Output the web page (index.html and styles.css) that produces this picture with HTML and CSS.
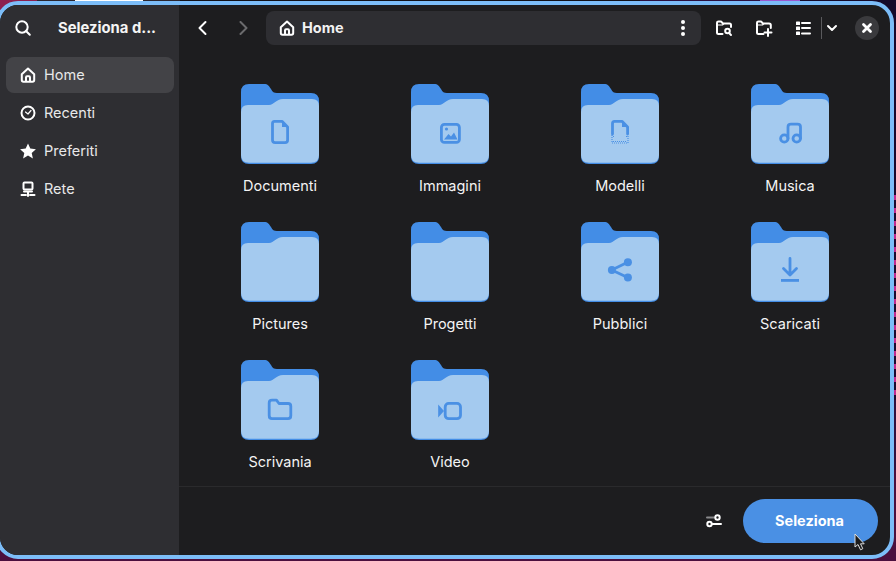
FILE: index.html
```html
<!DOCTYPE html>
<html lang="it">
<head>
<meta charset="utf-8">
<title>Seleziona</title>
<link rel="stylesheet" href="styles.css">
</head>
<body>
<svg class="sprite" width="0" height="0" aria-hidden="true">
  <defs>
    <symbol id="folder" viewBox="0 0 78 80">
      <path class="f-back" d="M8 0H23C27 0 28 2 30 5C31.500 8 33 9 36 9H70Q78 9 78 17V72Q78 80 70 80H8Q0 80 0 72V8Q0 0 8 0Z"/>
      <path class="f-front" d="M0 28Q0 21 7 21H28C33 21 35 15 42 15H71Q78 15 78 22V71Q78 78.800 70 78.800H8Q0 78.800 0 71Z"/>
    </symbol>
    <symbol id="home" viewBox="0 0 16 16">
      <path class="ln" d="M1.800 7.300L8 1.500L14.200 7.300V13Q14.200 14.700 12.500 14.700H3.500Q1.800 14.700 1.800 13ZM6 14.700V10.500Q6 9.300 7 9.300H9Q10 9.300 10 10.500V14.700"/>
    </symbol>
  </defs>
</svg>

<div class="window">
  <aside class="sidebar">
    <header class="side-head">
      <svg class="i16" viewBox="0 0 16 16"><circle class="ln" cx="7" cy="7" r="5.700"/><path class="ln" d="M11 11L14.800 14.800"/></svg>
      <span class="side-title">Seleziona d...</span>
    </header>
    <nav class="places">
      <a class="place active"><svg class="i16"><use href="#home"/></svg><span class="place-label">Home</span></a>
      <a class="place"><svg class="i16" viewBox="0 0 16 16"><circle class="ln" cx="8" cy="8" r="6.500"/><path class="ln thin" d="M5.500 7L8 9L11 5.500"/></svg><span class="place-label">Recenti</span></a>
      <a class="place"><svg class="i16" viewBox="0 0 16 16"><path class="fl" d="M8 .5L10.300 5.600L15.900 6.200L11.700 9.900L12.900 15.400L8 12.600L3.100 15.400L4.300 9.900L.1 6.200L5.700 5.600Z"/></svg><span class="place-label">Preferiti</span></a>
      <a class="place"><svg class="i16" viewBox="0 0 16 16"><rect class="ln" x="3.500" y="1.500" width="9" height="7" rx="1"/><path class="ln" d="M4 10.500H12M8 10.500V15M1.500 14H6M10 14H14.500"/></svg><span class="place-label">Rete</span></a>
    </nav>
  </aside>

  <main class="main">
    <header class="toolbar">
      <button class="tool nav-btn"><svg class="i16" viewBox="0 0 16 16"><path class="ln" d="M10.500 2L4.500 8L10.500 14"/></svg></button>
      <button class="tool nav-btn dim"><svg class="i16" viewBox="0 0 16 16"><path class="ln" d="M5.500 2L11.500 8L5.500 14"/></svg></button>
      <div class="pathbar">
        <svg class="i16"><use href="#home"/></svg>
        <span class="path-label">Home</span>
        <svg class="kebab" viewBox="0 0 4 16"><circle class="fl" cx="2" cy="2" r="2"/><circle class="fl" cx="2" cy="8" r="2"/><circle class="fl" cx="2" cy="14" r="2"/></svg>
      </div>
      <div class="actions">
        <button class="tool act"><svg class="i16" viewBox="0 0 16 16"><path class="ln" d="M6.500 14H2.500Q1 14 1 12.500V2.800Q1 1.500 2.500 1.500H5L7 3.500H13.500Q15 3.500 15 5V7"/><path class="ln thin" d="M1 5H6.500L8 3.500"/><circle class="ln" cx="11.500" cy="11" r="2.300"/><path class="ln" d="M13 13L15 15"/></svg></button>
        <button class="tool act"><svg class="i16" viewBox="0 0 16 16"><path class="ln" d="M7.500 14H2.500Q1 14 1 12.500V2.800Q1 1.500 2.500 1.500H5L7 3.500H13Q14.800 3.500 14.800 5V8"/><path class="ln thin" d="M1 5H6.500L8 3.500"/><path class="ln" d="M12 9V16M8.500 12.500H15.500"/></svg></button>
        <button class="tool act list"><svg class="i16" viewBox="0 0 16 16"><rect class="fl" x="1" y="1.500" width="4" height="3.500" rx=".6"/><rect class="fl" x="1" y="6.500" width="4" height="3.500" rx=".6"/><rect class="fl" x="1" y="11.500" width="4" height="3.500" rx=".6"/><path class="ln" d="M7 3H15M7 8H15M7 13.500H15"/></svg></button>
        <span class="divider"></span>
        <button class="tool chev"><svg class="i12" viewBox="0 0 12 12"><path class="ln" d="M2 4L6 8L10 4"/></svg></button>
      </div>
      <button class="close"><svg class="i12" viewBox="0 0 12 12"><path class="ln bold" d="M2.500 2.500L9.500 9.500M9.500 2.500L2.500 9.500"/></svg></button>
    </header>

    <section class="grid">
      <figure class="item">
        <svg class="folder" viewBox="0 0 78 80"><use href="#folder" width="78" height="80"/><path class="em" d="M33.500 37.300H41L46.600 43V56Q46.600 58.700 44 58.700H34.200Q31.500 58.700 31.500 56V39.500Q31.500 37.300 33.500 37.300Z"/><path class="em-fill" d="M41 37.300L46.800 43H41Z"/></svg>
        <figcaption>Documenti</figcaption>
      </figure>
      <figure class="item">
        <svg class="folder" viewBox="0 0 78 80"><use href="#folder" width="78" height="80"/><rect class="em" x="30.400" y="40.400" width="18" height="18" rx="3"/><circle class="em-fill" cx="35.500" cy="45" r="1.600"/><path class="em-fill" d="M33 55.500L37.500 50L40 52.500L43 48.500L46.500 55.500Z"/></svg>
        <figcaption>Immagini</figcaption>
      </figure>
      <figure class="item">
        <svg class="folder" viewBox="0 0 78 80"><use href="#folder" width="78" height="80"/><path class="em" d="M31.500 50V39.500Q31.500 37.300 33.500 37.300H41L46.600 43V50"/><path class="em-fill" d="M41 37.300L46.800 43H41Z"/><path class="em-dots" d="M31 51V59H47V51"/><path class="em-dots" d="M32 57.500H46"/><path class="em-dots" d="M32 52.500H33M45 52.500H46"/></svg>
        <figcaption>Modelli</figcaption>
      </figure>
      <figure class="item">
        <svg class="folder" viewBox="0 0 78 80"><use href="#folder" width="78" height="80"/><circle class="em" cx="33.300" cy="54.500" r="3.700"/><circle class="em" cx="45.700" cy="54.500" r="3.700"/><path class="em" d="M37 54.500V43Q37 40.200 40 40.200H46.500Q49.500 40.200 49.500 43V54.500"/></svg>
        <figcaption>Musica</figcaption>
      </figure>

      <figure class="item">
        <svg class="folder" viewBox="0 0 78 80"><use href="#folder" width="78" height="80"/></svg>
        <figcaption>Pictures</figcaption>
      </figure>
      <figure class="item">
        <svg class="folder" viewBox="0 0 78 80"><use href="#folder" width="78" height="80"/></svg>
        <figcaption>Progetti</figcaption>
      </figure>
      <figure class="item">
        <svg class="folder" viewBox="0 0 78 80"><use href="#folder" width="78" height="80"/><path class="em" d="M46.700 40.300L30.700 48L46.700 55.500"/><circle class="em-fill" cx="30.900" cy="48" r="4"/><circle class="em-fill" cx="46.900" cy="40.300" r="4"/><circle class="em-fill" cx="46.900" cy="55.500" r="4"/></svg>
        <figcaption>Pubblici</figcaption>
      </figure>
      <figure class="item">
        <svg class="folder" viewBox="0 0 78 80"><use href="#folder" width="78" height="80"/><path class="em" d="M39 36.500V53M32.500 46.500L39 53L45.500 46.500"/><rect class="em-fill" x="30" y="57" width="18" height="2.800"/></svg>
        <figcaption>Scaricati</figcaption>
      </figure>

      <figure class="item">
        <svg class="folder" viewBox="0 0 78 80"><use href="#folder" width="78" height="80"/><path class="em" d="M28.200 55.500V43Q28.200 40.200 31 40.200H35.500L38 43.500H47Q49.800 43.500 49.800 46.300V55.500Q49.800 58.700 47 58.700H31Q28.200 58.700 28.200 55.500Z"/></svg>
        <figcaption>Scrivania</figcaption>
      </figure>
      <figure class="item">
        <svg class="folder" viewBox="0 0 78 80"><use href="#folder" width="78" height="80"/><rect class="em" x="34.200" y="43.400" width="15.300" height="15.300" rx="3.500"/><path class="em-fill" d="M27.200 44.500L33 51L27.200 57.500Z"/></svg>
        <figcaption>Video</figcaption>
      </figure>
    </section>

    <footer class="footer">
      <svg class="i16 sliders" viewBox="0 0 16 16"><path class="ln dimline" d="M1 4.500H8"/><circle class="ln" cx="11.500" cy="4.500" r="2.200"/><circle class="ln" cx="3.500" cy="11" r="2.200"/><path class="ln" d="M6.500 11H15"/></svg>
      <button class="confirm">Seleziona</button>
    </footer>
  </main>
</div>

<svg class="cursor" viewBox="0 0 11 18"><path d="M1 1V14L4 11.500L6.500 16.800L8.800 15.700L6.500 10.800H10.200Z"/></svg>
</body>
</html>
```

FILE: styles.css
```css
* {
  box-sizing: border-box;
}

html,
body {
  margin: 0;
  height: 100%;
}

body {
  position: relative;
  width: 896px;
  height: 561px;
  overflow: hidden;
  font-family: "Inter", "Liberation Sans", sans-serif;
  background-color: #4b0f3e;
  background-image:
    linear-gradient(to right, #8c2050 0 37px, #2a2630 37px 75px, #ffffff 75px 143px, #2a2630 143px 180px, #111018 180px 640px, #2a1040 640px 760px, #9a5ad0 760px 800px, #140a2a 800px),
    linear-gradient(#8c2050, #8c2050),
    linear-gradient(to bottom, #16092c 0 190px, transparent 190px 400px, #30103f 400px 470px, #4b0f3e 470px),
    repeating-linear-gradient(to bottom, #c02a90 0 5px, #1c0a30 5px 13px),
    linear-gradient(#140a2a, #140a2a);
  background-size: 100% 1px, 24px 24px, 2px 100%, 2px 100%, 30px 40px;
  background-position: 0 0, 0 0, 100% 0, 100% 0, 100% 0;
  background-repeat: no-repeat;
}

.sprite {
  position: absolute;
}

.window {
  position: absolute;
  left: -4px;
  top: 1px;
  width: 898px;
  height: 558px;
  display: flex;
  border: 4px solid #7cbdf8;
  border-radius: 22px;
  overflow: hidden;
  background: #1d1d1f;
}

.sidebar {
  flex: 0 0 179px;
  display: flex;
  flex-direction: column;
  background: #2e2e32;
}

.side-head {
  height: 46px;
  display: flex;
  align-items: center;
  padding-left: 15px;
  gap: 27px;
}

.side-title {
  font-size: 14.800px;
  font-weight: 700;
  color: #f5f5f5;
  white-space: nowrap;
}

.places {
  display: flex;
  flex-direction: column;
  gap: 2px;
  padding: 6px 5px 0 6px;
}

.place {
  height: 36px;
  display: flex;
  align-items: center;
  gap: 8px;
  padding-left: 14px;
  border-radius: 8px;
  font-size: 14.500px;
  color: #e8e8e9;
}

.place-label {
  margin-bottom: 2px;
}

.place.active {
  background: #434347;
}

.i16 {
  width: 16px;
  height: 16px;
  flex: none;
  overflow: visible;
}

.i12 {
  width: 12px;
  height: 12px;
  flex: none;
}

.ln {
  fill: none;
  stroke: #ffffff;
  stroke-width: 2;
  stroke-linecap: round;
  stroke-linejoin: round;
}

.ln.thin {
  stroke-width: 1.200;
}

.ln.bold {
  stroke-width: 2.800;
}

.ln.dimline {
  stroke: #8a8a8c;
}

.fl {
  fill: #ffffff;
}

.main {
  flex: 1;
  min-width: 0;
  display: flex;
  flex-direction: column;
}

.toolbar {
  height: 46px;
  flex: none;
  display: flex;
  align-items: center;
  padding-left: 4px;
}

button {
  border: 0;
  padding: 0;
  background: none;
  font: inherit;
  color: inherit;
}

.tool {
  display: flex;
  align-items: center;
  justify-content: center;
}

.nav-btn {
  width: 40px;
  height: 34px;
}

.nav-btn.dim {
  opacity: 0.35;
}

.pathbar {
  width: 435px;
  height: 34px;
  margin-left: 3px;
  display: flex;
  align-items: center;
  gap: 7px;
  padding: 0 16px 0 13px;
  border-radius: 8px;
  background: #2e2e32;
}

.path-label {
  flex: 1;
  margin-bottom: 2px;
  font-size: 14.500px;
  font-weight: 700;
  color: #f2f2f2;
}

.kebab {
  width: 4px;
  height: 16px;
}

.actions {
  display: flex;
  align-items: center;
  margin-left: 3px;
}

.act {
  width: 40px;
  height: 34px;
}

.act.list {
  width: 38px;
}

.divider {
  width: 1px;
  height: 22px;
  margin-left: -1px;
  background: #5a5a5d;
}

.chev {
  width: 20px;
  height: 34px;
}

.close {
  width: 24px;
  height: 24px;
  margin-left: 13px;
  display: flex;
  align-items: center;
  justify-content: center;
  border-radius: 50%;
  background: #3a3a3d;
}

.grid {
  flex: 1;
  min-height: 0;
  overflow: hidden;
  display: grid;
  grid-template-columns: repeat(4, 170px);
  grid-auto-rows: 138px;
  padding: 33px 0 0 16px;
  align-content: start;
}

.item {
  margin: 0;
  display: flex;
  flex-direction: column;
  align-items: center;
}

.folder {
  width: 78px;
  height: 80px;
  display: block;
}

.f-back {
  fill: #438de6;
}

.f-front {
  fill: #a4caef;
}

.em {
  fill: none;
  stroke: #4a90e4;
  stroke-width: 2.800;
  stroke-linecap: round;
  stroke-linejoin: round;
}

.em-fill {
  fill: #4a90e4;
}

.em-dots {
  fill: none;
  stroke: #4a90e4;
  stroke-width: 1.200;
  stroke-dasharray: 1 1;
}

figcaption {
  margin-top: 13px;
  font-size: 14.500px;
  line-height: 18px;
  color: #f4f4f4;
}

.footer {
  height: 69px;
  flex: none;
  display: flex;
  align-items: center;
  justify-content: flex-end;
  padding: 0 12px 0 0;
  border-top: 1px solid #2a2a2c;
}

.sliders {
  margin-right: 21px;
}

.confirm {
  width: 135px;
  height: 44px;
  padding: 0 2px 2px 0;
  border-radius: 22px;
  background: #4a90e4;
  color: #ffffff;
  font-size: 14.500px;
  font-weight: 700;
}

.cursor {
  position: absolute;
  left: 854px;
  top: 533px;
  width: 11px;
  height: 18px;
}

.cursor path {
  fill: #1a1a1a;
  stroke: #dddddd;
  stroke-width: 1;
}
```
